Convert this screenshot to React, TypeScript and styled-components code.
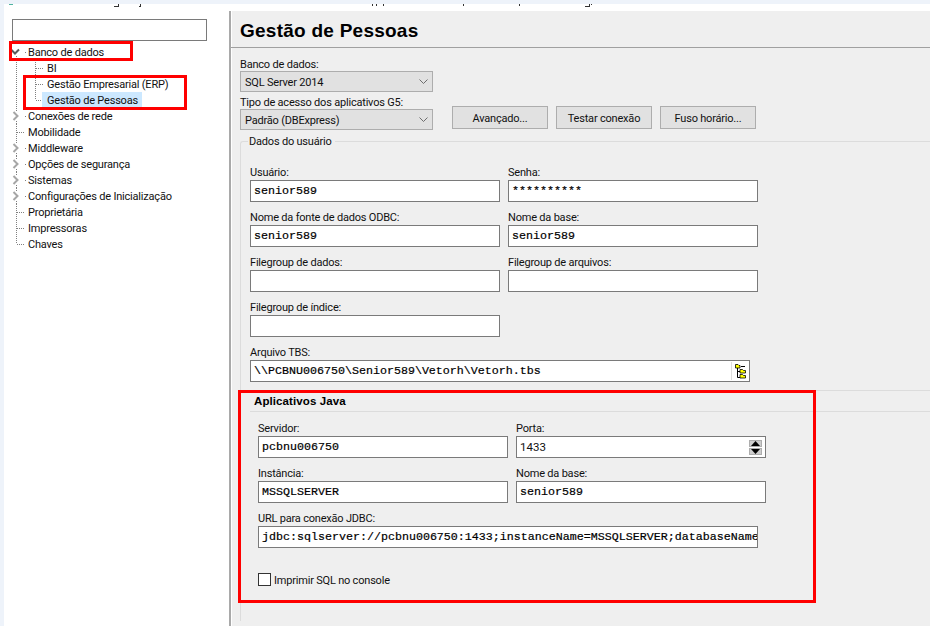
import { FC, ReactNode } from "react";
import styled, { createGlobalStyle } from "styled-components";

const GlobalStyle = createGlobalStyle`
  html, body {
    margin: 0;
    height: 100%;
    overflow: hidden;
    background: #eef3fa;
  }
  body {
    font-family: Roboto, "Liberation Sans", Arial, sans-serif;
    font-size: 11px;
    letter-spacing: -0.2px;
    color: #111;
  }
`;

const Page = styled.div`
  position: relative;
  width: 930px;
  height: 626px;
  padding-top: 4px;
  padding-left: 4px;
  box-sizing: border-box;
  display: flex;
  flex-direction: column;
  overflow: hidden;
`;

const TopStrip = styled.div`
  height: 7px;
  flex: none;
  background: #fff;
  overflow: hidden;
`;

const Main = styled.div`
  flex: 1;
  display: flex;
  min-height: 0;
`;

/* left tree */
const Sidebar = styled.div`
  width: 225px;
  flex: none;
  background: #fff;
  padding: 8px 0 0 8px;
  box-sizing: border-box;
`;

const SearchBox = styled.div`
  width: 195px;
  height: 22px;
  box-sizing: border-box;
  border: 1px solid #7a7a7a;
  background: #fff;
`;

const Tree = styled.div`
  margin-top: 3px;
  margin-left: -8px;
`;

const TreeRow = styled.div`
  display: flex;
  height: 16px;
  align-items: center;
`;

const TreeLabel = styled.span<{ $selected?: boolean }>`
  padding: 0 4px 0 5px;
  height: 16px;
  line-height: 18px;
  white-space: nowrap;
  background: ${(p) => (p.$selected ? "#cce8ff" : "transparent")};
`;

const GuideSvg = styled.svg`
  flex: none;
  overflow: visible;
`;

type Guide = "pass" | "branch" | "last" | "open" | "closed";

// one 19px column of the tree: dotted guides and the expander
const TreeCell: FC<{ kind: Guide }> = ({ kind }) => {
  const dots = { stroke: "#808080", strokeWidth: 1, strokeDasharray: "1 1", fill: "none" };
  return (
    <GuideSvg width="19" height="16" viewBox="0 0 19 16">
      {(kind === "pass" || kind === "branch") && <path d="M12.5 0V16" {...dots} />}
      {kind === "last" && <path d="M12.5 0V8" {...dots} />}
      {(kind === "branch" || kind === "last") && <path d="M13 8.5H21" {...dots} />}
      {kind === "open" && (
        <>
          <path d="M12.5 12V16" {...dots} />
          <path d="M7 5.5L11 9.5L15 5.5" stroke="#595959" strokeWidth="2" fill="none" />
          <path d="M21 8.5H22" {...dots} />
        </>
      )}
      {kind === "closed" && (
        <>
          <path d="M12.5 0V3M12.5 13V16" {...dots} />
          <path d="M9.5 4L13.5 8L9.5 12" stroke="#a6a6a6" strokeWidth="2" fill="none" />
          <path d="M21 8.5H22" {...dots} />
        </>
      )}
    </GuideSvg>
  );
};

const treeItems: { label: string; cells: Guide[]; selected?: boolean }[] = [
  { label: "Banco de dados", cells: ["open"] },
  { label: "BI", cells: ["pass", "branch"] },
  { label: "Gestão Empresarial (ERP)", cells: ["pass", "branch"] },
  { label: "Gestão de Pessoas", cells: ["pass", "last"], selected: true },
  { label: "Conexões de rede", cells: ["closed"] },
  { label: "Mobilidade", cells: ["branch"] },
  { label: "Middleware", cells: ["closed"] },
  { label: "Opções de segurança", cells: ["closed"] },
  { label: "Sistemas", cells: ["closed"] },
  { label: "Configurações de Inicialização", cells: ["closed"] },
  { label: "Proprietária", cells: ["branch"] },
  { label: "Impressoras", cells: ["branch"] },
  { label: "Chaves", cells: ["last"] },
];

/* right panel */
const Panel = styled.div`
  flex: 1;
  min-width: 0;
  background: #efefef;
  border-left: 2px solid #a9a9a9;
  box-shadow: inset 1px 0 0 #fff;
  display: flex;
  flex-direction: column;
`;

const TitleBar = styled.div`
  height: 37px;
  flex: none;
  box-sizing: border-box;
  border-bottom: 1px solid #a0a0a0;
  padding: 9px 0 0 9px;
`;

const Title = styled.h1`
  margin: 0;
  font-family: "Liberation Sans", Arial, sans-serif;
  font-size: 19px;
  line-height: 22px;
  letter-spacing: 0.25px;
  font-weight: 700;
  color: #000;
`;

const PanelBody = styled.div`
  flex: 1;
  padding: 9px 0 0 9px;
  position: relative;
`;

const Label = styled.label`
  display: block;
  height: 14px;
  line-height: 16px;
  white-space: nowrap;
`;

const ComboBox = styled.div`
  width: 193px;
  height: 21px;
  box-sizing: border-box;
  border: 1px solid #adadad;
  background: #e1e1e1;
  display: flex;
  align-items: center;
  justify-content: space-between;
  padding: 1px 4px 0 4px;
  margin-bottom: 3px;
`;

const AccessRow = styled.div`
  display: flex;
  align-items: flex-end;
`;

const ButtonBar = styled.div`
  display: flex;
  gap: 8px;
  margin-left: 19px;
  margin-bottom: 4px;
`;

const Button = styled.button`
  width: 96px;
  height: 23px;
  box-sizing: border-box;
  border: 1px solid #adadad;
  background: #e1e1e1;
  font: inherit;
  letter-spacing: inherit;
  color: inherit;
  padding: 1px 0 0;
`;

const GroupBox = styled.fieldset`
  margin: 1px 0 0;
  padding: 0 0 0 9px;
  border: none;
  border-top: 1px solid #dcdcdc;
  border-left: 1px solid #dcdcdc;
  border-top-left-radius: 3px;
  min-height: 486px;
  position: relative;
`;

const GroupLegend = styled.legend`
  padding: 0 3px 0 1px;
  margin-left: -2px;
  line-height: 16px;
  height: 14px;
`;

const FieldGrid = styled.div<{ $top?: number }>`
  display: grid;
  grid-template-columns: 250px 250px;
  column-gap: 8px;
  row-gap: 8px;
  margin-top: ${(p) => p.$top ?? 0}px;
`;

const Field = styled.div<{ $wide?: boolean; $width?: number }>`
  grid-column: ${(p) => (p.$wide ? "1 / span 2" : "auto")};
  width: ${(p) => (p.$width ? `${p.$width}px` : "auto")};
  display: flex;
  flex-direction: column;
  gap: 1px;
`;

const Input = styled.div`
  height: 22px;
  box-sizing: border-box;
  border: 1px solid #7a7a7a;
  background: #fff;
  position: relative;
  display: flex;
  align-items: center;
  padding-left: 3px;
  overflow: hidden;
`;

const MonoText = styled.span`
  font-family: "Liberation Mono", "Courier New", monospace;
  font-size: 11.67px;
  letter-spacing: 0;
  font-weight: 400;
  color: #000;
  white-space: pre;
  -webkit-text-stroke: 0.2px #000;
`;

const SpinValue = styled.span`
  font-size: 11.5px;
  letter-spacing: 0;
`;

const BrowseButton = styled.span`
  margin-left: auto;
  width: 15px;
  height: 18px;
  flex: none;
  border-left: 1px solid #dcdcdc;
  display: flex;
  align-items: center;
  justify-content: center;
  padding-left: 1px;
  margin-right: 1px;
`;

const Spinner = styled.span`
  margin-left: auto;
  margin-right: 3px;
  display: flex;
  flex-direction: column;
  gap: 1px;
`;

const SpinButton = styled.span`
  width: 13px;
  height: 7px;
  box-sizing: border-box;
  border: 1px solid #adadad;
  background: #cdcdcd;
  display: flex;
  align-items: center;
  justify-content: center;
`;

const JavaSection = styled.section`
  margin-top: 8px;
`;

const JavaHeading = styled.h2`
  margin: 0;
  height: 20px;
  line-height: 20px;
  padding-left: 4px;
  font-family: "Liberation Sans", Arial, sans-serif;
  font-size: 11.5px;
  letter-spacing: 0.1px;
  font-weight: 700;
  color: #000;
  border-top: 1px solid #dcdcdc;
  border-bottom: 1px solid #dcdcdc;
`;

const JavaFields = styled.div`
  padding: 9px 0 0 8px;
`;

const CheckRow = styled.div`
  display: flex;
  align-items: center;
  gap: 3px;
  margin-top: 24px;
`;

const CheckBox = styled.span`
  width: 13px;
  height: 13px;
  box-sizing: border-box;
  border: 1px solid #333;
  background: #fff;
`;

const CheckLabel = styled.span`
  padding-top: 2px;
`;

const Callout = styled.div<{ $x: number; $y: number; $w: number; $h: number }>`
  position: absolute;
  left: ${(p) => p.$x}px;
  top: ${(p) => p.$y}px;
  width: ${(p) => p.$w}px;
  height: ${(p) => p.$h}px;
  box-sizing: border-box;
  border: 3px solid #f00;
  pointer-events: none;
`;

// the few pixels left over from the window above, cut off by the capture
const StripMarks = () => (
  <svg width="926" height="7" viewBox="4 4 926 7" style={{ display: "block" }}>
    <path d="M9 4.5H13" stroke="#4fb3a0" />
    <path
      d="M114 6.5H118M118.5 4V7M139 6.5H141M140.5 4V7M372.5 4V6M376.5 4V6M383.5 4V6M463.5 4V6M519.5 4V6M585 6.5H589M589.5 4V7M591.5 4V5"
      stroke="#333"
    />
  </svg>
);

const Chevron = () => (
  <svg width="9" height="6" viewBox="0 0 9 6">
    <path d="M0.5 0.5L4.5 4.5L8.5 0.5" stroke="#6d6d6d" fill="none" />
  </svg>
);

const FolderTree = () => (
  <svg width="11" height="16" viewBox="0 0 11 16">
    <path d="M2.5 3V14.5H5M2.5 8.5H5M6 3.5H10" stroke="#000" fill="none" />
    <path d="M0.5 1.5H3L4 2.5H5V5H0.5Z" fill="#ff0" stroke="#000" strokeWidth="0.8" />
    <path d="M5 6.5H7.5L8.5 7.5H10.5V10H5Z" fill="#ff0" stroke="#000" strokeWidth="0.8" />
    <path d="M5 11.5H7.5L8.5 12.5H10.5V15H5Z" fill="#ff0" stroke="#000" strokeWidth="0.8" />
  </svg>
);

const Triangle: FC<{ up?: boolean }> = ({ up }) => (
  <svg width="9" height="5" viewBox="0 0 9 5">
    <path d={up ? "M4.5 0L9 5H0Z" : "M0 0H9L4.5 5Z"} fill="#000" />
  </svg>
);

const TextField: FC<{ label: string; value?: string; wide?: boolean; width?: number; children?: ReactNode }> = ({
  label,
  value,
  wide,
  width,
  children,
}) => (
  <Field $wide={wide} $width={width}>
    <Label>{label}</Label>
    <Input>
      {value && <MonoText>{value}</MonoText>}
      {children}
    </Input>
  </Field>
);

const Select: FC<{ label: string; value: string }> = ({ label, value }) => (
  <div>
    <Label>{label}</Label>
    <ComboBox>
      <span>{value}</span>
      <Chevron />
    </ComboBox>
  </div>
);

const App: FC = () => (
  <Page>
    <GlobalStyle />
    <TopStrip>
      <StripMarks />
    </TopStrip>
    <Main>
      <Sidebar>
        <SearchBox />
        <Tree>
          {treeItems.map((item) => (
            <TreeRow key={item.label}>
              {item.cells.map((cell, i) => (
                <TreeCell key={i} kind={cell} />
              ))}
              <TreeLabel $selected={item.selected}>{item.label}</TreeLabel>
            </TreeRow>
          ))}
        </Tree>
      </Sidebar>
      <Panel>
        <TitleBar>
          <Title>Gestão de Pessoas</Title>
        </TitleBar>
        <PanelBody>
          <Select label="Banco de dados:" value="SQL Server 2014" />
          <AccessRow>
            <Select label="Tipo de acesso dos aplicativos G5:" value="Padrão (DBExpress)" />
            <ButtonBar>
              <Button>Avançado...</Button>
              <Button>Testar conexão</Button>
              <Button>Fuso horário...</Button>
            </ButtonBar>
          </AccessRow>
          <GroupBox>
            <GroupLegend>Dados do usuário</GroupLegend>
            <FieldGrid $top={17}>
              <TextField label="Usuário:" value="senior589" />
              <TextField label="Senha:" value="**********" />
              <TextField label="Nome da fonte de dados ODBC:" value="senior589" />
              <TextField label="Nome da base:" value="senior589" />
              <TextField label="Filegroup de dados:" />
              <TextField label="Filegroup de arquivos:" />
              <TextField label="Filegroup de índice:" />
              <span />
              <TextField wide width={500} label="Arquivo TBS:" value="\\PCBNU006750\Senior589\Vetorh\Vetorh.tbs">
                <BrowseButton>
                  <FolderTree />
                </BrowseButton>
              </TextField>
            </FieldGrid>
            <JavaSection>
              <JavaHeading>Aplicativos Java</JavaHeading>
              <JavaFields>
                <FieldGrid>
                  <TextField label="Servidor:" value="pcbnu006750" />
                  <TextField label="Porta:">
                    <SpinValue>1433</SpinValue>
                    <Spinner>
                      <SpinButton>
                        <Triangle up />
                      </SpinButton>
                      <SpinButton>
                        <Triangle />
                      </SpinButton>
                    </Spinner>
                  </TextField>
                  <TextField label="Instância:" value="MSSQLSERVER" />
                  <TextField label="Nome da base:" value="senior589" />
                  <TextField
                    wide
                    width={500}
                    label="URL para conexão JDBC:"
                    value="jdbc:sqlserver://pcbnu006750:1433;instanceName=MSSQLSERVER;databaseName=senior589"
                  />
                </FieldGrid>
                <CheckRow>
                  <CheckBox />
                  <CheckLabel>Imprimir SQL no console</CheckLabel>
                </CheckRow>
              </JavaFields>
            </JavaSection>
          </GroupBox>
        </PanelBody>
      </Panel>
    </Main>
    <Callout $x={9} $y={41} $w={124} $h={20} />
    <Callout $x={23} $y={75} $w={164} $h={35} />
    <Callout $x={238} $y={390} $w={578} $h={213} />
  </Page>
);

export default App;
